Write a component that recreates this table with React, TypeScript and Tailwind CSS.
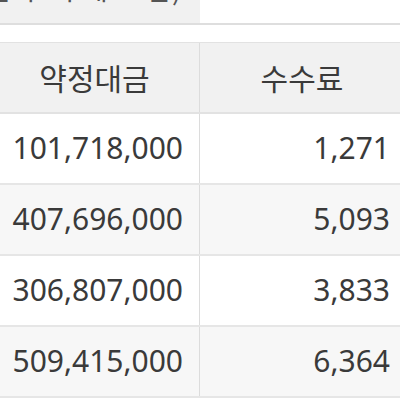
import React from "react";

const rows = [
  ["101,718,000", "1,271"],
  ["407,696,000", "5,093"],
  ["306,807,000", "3,833"],
  ["509,415,000", "6,364"],
];

const font = { fontFamily: '"Noto Sans", "Noto Sans CJK KR", sans-serif' };
const kr = { fontFamily: '"Noto Sans CJK KR", sans-serif' };

export default function App() {
  return (
    <div className="w-[400px] h-[400px] overflow-hidden bg-white text-[#3a3a3a]" style={font}>
      <div className="flex h-[25px] border-b-2 border-[#dedede]">
        <div className="w-[200px] bg-[#f1f1f1] overflow-hidden relative">
          <div className="absolute left-[-14px] top-[-30px] text-[28px] leading-[36px] whitespace-nowrap text-[#555]" style={kr}>
            금 부 가 세 포 함)
          </div>
        </div>
        <div className="flex-1 bg-white" />
      </div>
      <div className="mt-[17px] border-t border-[#e2e2e2]">
        <div className="grid grid-cols-[200px_1fr] h-[71px] bg-[#f1f1f1] border-b-2 border-[#e2e2e2]">
          <div className="flex items-center justify-center border-r border-[#dcdcdc] text-[30px] pr-[10px]" style={kr}>
            약정대금
          </div>
          <div className="flex items-center justify-center text-[30px] pl-[4px]" style={kr}>
            수수료
          </div>
        </div>
        {rows.map((r, i) => (
          <div
            key={i}
            className={`grid grid-cols-[200px_1fr] h-[71px] border-b-2 border-[#e6e6e6] ${i % 2 === 1 ? "bg-[#f7f7f7]" : "bg-white"}`}
          >
            <div className="flex items-center justify-end pr-[16px] border-r border-[#dcdcdc] text-[30px] pb-[2px]">
              {r[0]}
            </div>
            <div className="flex items-center justify-end pr-[10px] text-[30px] pb-[2px]">
              {r[1]}
            </div>
          </div>
        ))}
      </div>
    </div>
  );
}
